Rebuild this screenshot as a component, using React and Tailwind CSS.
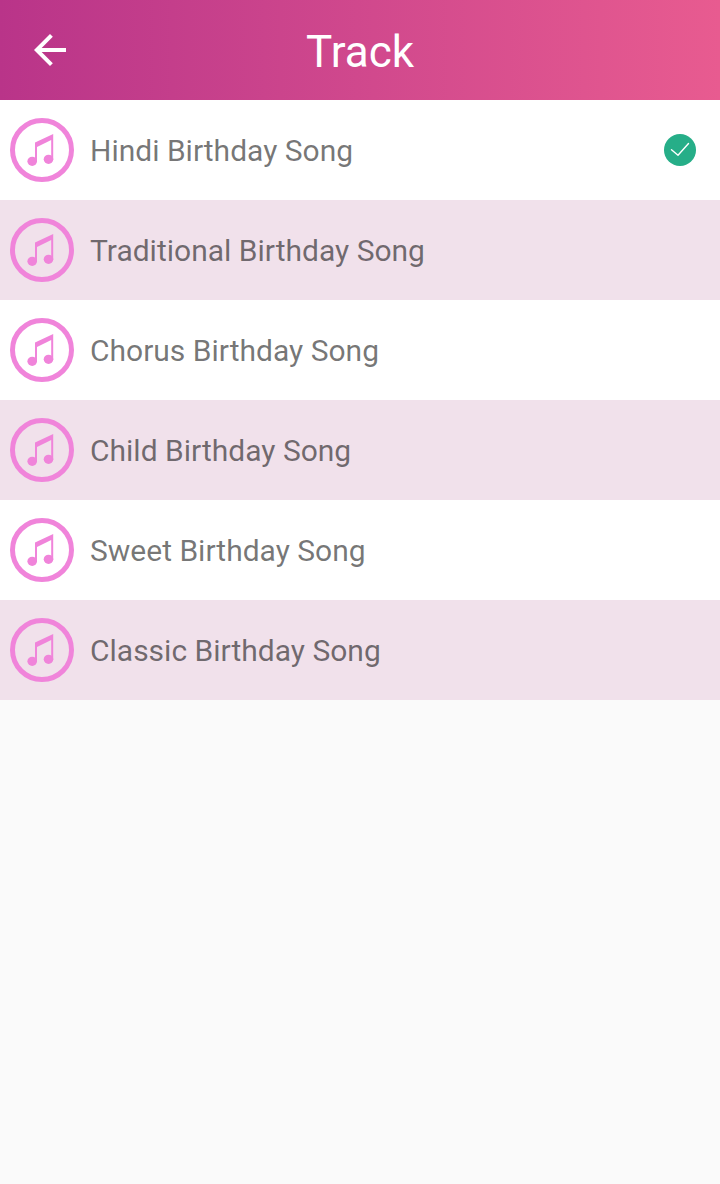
import { useState } from "react";

const TRACKS = [
  { id: "hindi", title: "Hindi Birthday Song" },
  { id: "traditional", title: "Traditional Birthday Song" },
  { id: "chorus", title: "Chorus Birthday Song" },
  { id: "child", title: "Child Birthday Song" },
  { id: "sweet", title: "Sweet Birthday Song" },
  { id: "classic", title: "Classic Birthday Song" },
];

function BackIcon() {
  return (
    <svg viewBox="4 4 16 16" className="size-8" fill="currentColor" aria-hidden="true">
      <path d="M20 11H7.83l5.59-5.59L12 4l-8 8 8 8 1.41-1.41L7.83 13H20v-2z" />
    </svg>
  );
}

function MusicIcon() {
  return (
    <svg viewBox="0 0 64 64" className="size-16 shrink-0 text-[#f084da]" aria-hidden="true">
      <circle cx="32" cy="32" r="29.5" fill="none" stroke="currentColor" strokeWidth="5" />
      <g fill="currentColor">
        <ellipse cx="22.2" cy="43.3" rx="4.8" ry="4.6" />
        <ellipse cx="38.5" cy="41.3" rx="4.8" ry="4.6" />
        <path d="M25 24.6 43.2 16V41.5H41.2V22L27 29V43.5H25Z" />
      </g>
    </svg>
  );
}

function CheckIcon() {
  return (
    <svg viewBox="0 0 32 32" className="size-8 shrink-0" aria-hidden="true">
      <circle cx="16" cy="16" r="16" fill="#26ae88" />
      <path d="M7.5 15.8 14 21.3 24.5 9.5" fill="none" stroke="#fff" strokeWidth="1.4" strokeLinecap="round" strokeLinejoin="round" />
    </svg>
  );
}

export default function App() {
  const [selected, setSelected] = useState("hindi");

  return (
    <div className="min-h-screen bg-[#fafafa] font-['Roboto',sans-serif]">
      <header className="grid h-25 grid-cols-[100px_1fr_100px] items-center bg-linear-to-r from-[#b93489] to-[#e85b90] text-white">
        <button type="button" aria-label="Back" className="flex size-25 items-center justify-center">
          <BackIcon />
        </button>
        <h1 className="pt-1 text-center text-[44px] leading-[52px]">Track</h1>
      </header>

      <ul>
        {TRACKS.map((track) => (
          <li key={track.id} className="bg-white even:bg-[#f1e1eb]">
            <button
              type="button"
              aria-pressed={selected === track.id}
              onClick={() => setSelected(track.id)}
              className="flex h-25 w-full items-center gap-4 pr-6 pl-2.5 text-left"
            >
              <MusicIcon />
              <span className="flex-1 pt-0.5 text-[30px] leading-9 text-black/55">{track.title}</span>
              {selected === track.id && <CheckIcon />}
            </button>
          </li>
        ))}
      </ul>
    </div>
  );
}
